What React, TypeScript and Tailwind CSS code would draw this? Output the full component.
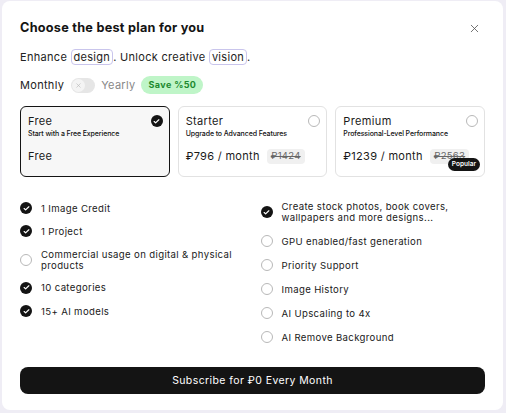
import React from 'react';
import { X, Check } from 'lucide-react';

const plans = [
  { name: 'Free', sub: 'Start with a Free Experience', price: 'Free', old: '', selected: true, popular: false },
  { name: 'Starter', sub: 'Upgrade to Advanced Features', price: '₽796 / month', old: '₽1424', selected: false, popular: false },
  { name: 'Premium', sub: 'Professional-Level Performance', price: '₽1239 / month', old: '₽2563', selected: false, popular: true },
];

const leftFeatures = [
  { text: '1 Image Credit', on: true },
  { text: '1 Project', on: true },
  { text: 'Commercial usage on digital & physical products', on: false },
  { text: '10 categories', on: true },
  { text: '15+ AI models', on: true },
];

const rightFeatures = [
  { text: 'Create stock photos, book covers, wallpapers and more designs...', on: true },
  { text: 'GPU enabled/fast generation', on: false },
  { text: 'Priority Support', on: false },
  { text: 'Image History', on: false },
  { text: 'AI Upscaling to 4x', on: false },
  { text: 'AI Remove Background', on: false },
];

const Tick = ({ on }: { on: boolean }) =>
  on ? (
    <span className="w-[12px] h-[12px] shrink-0 rounded-full bg-[#141414] flex items-center justify-center">
      <Check size={7} strokeWidth={4} className="text-white" />
    </span>
  ) : (
    <span className="w-[12px] h-[12px] shrink-0 rounded-full border border-[#b8b8b8] bg-white" />
  );

const Feature = ({ text, on }: { text: string; on: boolean }) => (
  <div className="flex items-center gap-[9px] min-h-[12px]">
    <Tick on={on} />
    <span className="text-[9.6px] leading-[11px] tracking-[0.35px] text-[#1a1a1a]">{text}</span>
  </div>
);

export default function App() {
  return (
    <div className="w-[506px] h-[413px] bg-[#efedf5] pl-[2px] pt-[1px] font-['Inter',sans-serif]">
      <div className="w-[501px] h-[409px] bg-white rounded-[8px] px-[18px] pt-[17px] flex flex-col">
        <div className="flex items-center justify-between">
          <h1 className="text-[12.7px] font-bold tracking-[0.25px] text-[#141414] leading-[20px]">Choose the best plan for you</h1>
          <X size={13} strokeWidth={1.5} className="text-[#555] mr-[4px]" />
        </div>

        <p className="mt-[11px] text-[11px] tracking-[0.3px] text-[#222] leading-[16px]">
          Enhance{' '}
          <span className="border border-[#c9c5ec] rounded-[4px] px-[2px]">design</span>. Unlock creative{' '}
          <span className="border border-[#c9c5ec] rounded-[4px] px-[2px]">vision</span>.
        </p>

        <div className="mt-[11px] flex items-center text-[11px] tracking-[0.3px] leading-[18px]">
          <span className="text-[#222]">Monthly</span>
          <span className="ml-[7px] w-[24px] h-[15px] rounded-full bg-[#e6e6e6] relative">
            <span className="absolute left-[1px] top-[1px] w-[13px] h-[13px] rounded-full bg-[#f4f4f4] flex items-center justify-center">
              <X size={7} strokeWidth={2} className="text-[#b5b5b5]" />
            </span>
          </span>
          <span className="ml-[6px] text-[#888]">Yearly</span>
          <span className="ml-[6px] h-[18px] px-[7px] rounded-full bg-[#bff5c8] text-[#1d8a2f] text-[9px] font-bold tracking-[0.4px] flex items-center">
            Save %50
          </span>
        </div>

        <div className="mt-[12px] grid grid-cols-3 gap-[8px]">
          {plans.map((p) => (
            <div
              key={p.name}
              className={`relative h-[71px] rounded-[6px] pl-[7px] pr-[6px] pt-[6px] ${
                p.selected ? 'border border-[#141414] bg-[#f7f7f7]' : 'border border-[#e2e2e2] bg-white'
              }`}
            >
              <div className="flex items-center justify-between">
                <span className="text-[11px] leading-[16px] tracking-[0.35px] text-[#1a1a1a]">{p.name}</span>
                <Tick on={p.selected} />
              </div>
              <div className="text-[7px] leading-[10px] font-medium tracking-[-0.1px] text-[#111]">{p.sub}</div>
              <div className="mt-[9px] flex items-center gap-[7px]">
                <span className="text-[11px] leading-[16px] tracking-[0.3px] text-[#1a1a1a]">{p.price}</span>
                {p.old && (
                  <span className="px-[4px] h-[15px] flex items-center rounded-[4px] bg-[#f0f0f0] text-[9.5px] text-[#666] line-through tracking-[0.3px]">
                    {p.old}
                  </span>
                )}
              </div>
              {p.popular && (
                <span className="absolute right-[4px] bottom-[5px] h-[13px] px-[4px] rounded-full bg-[#141414] text-white text-[6.5px] font-semibold flex items-center">
                  Popular
                </span>
              )}
            </div>
          ))}
        </div>

        <div className="mt-[24px] grid grid-cols-2 gap-x-[16px]">
          <div className="flex flex-col gap-[11.3px] pt-[1px]">
            {leftFeatures.map((f) => (
              <Feature key={f.text} {...f} />
            ))}
          </div>
          <div className="flex flex-col gap-[12px] mt-0">
            {rightFeatures.map((f) => (
              <Feature key={f.text} {...f} />
            ))}
          </div>
        </div>

        <button className="mt-auto mb-[16px] h-[27px] w-full rounded-[8px] bg-[#141414] text-white text-[10.5px] tracking-[0.4px]">
          Subscribe for ₽0 Every Month
        </button>
      </div>
    </div>
  );
}
